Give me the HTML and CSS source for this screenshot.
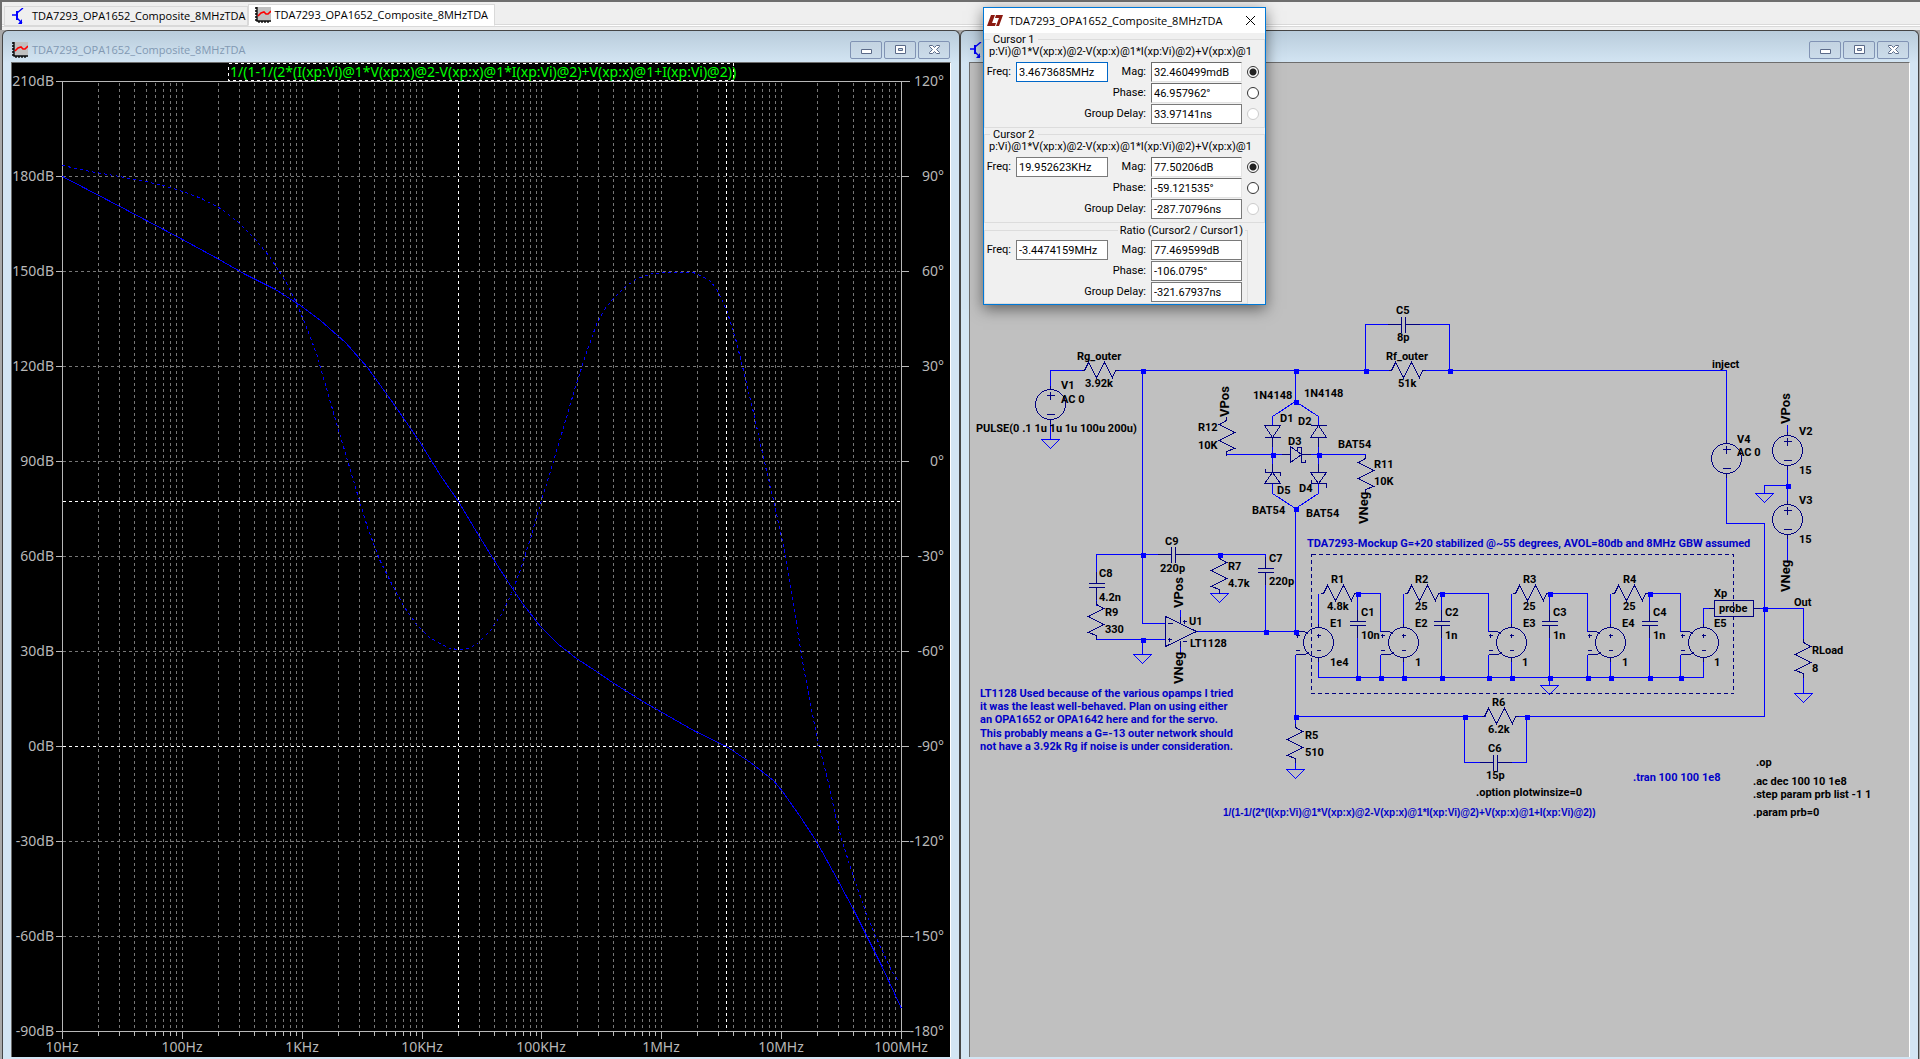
FILE: index.html
```html
<!DOCTYPE html>
<html lang="en">
<head>
<meta charset="utf-8">
<title>TDA7293_OPA1652_Composite_8MHzTDA</title>
<link rel="stylesheet" href="styles.css">
</head>
<body>
<svg class="defs" aria-hidden="true">
  <defs>
    <symbol id="icon-schematic" viewBox="0 0 16 16">
      <path d="M0 7H4M5 5L11 0M5 10L10 15" stroke="#00f" stroke-width="1.4" fill="none"/>
      <path d="M4 3h2v9H4zM10 11v5H6z" fill="#00f"/>
    </symbol>
    <symbol id="icon-plot" viewBox="0 0 16 16">
      <path d="M2 0H16V13H2z" fill="#c0c0c0"/>
      <path d="M2 0V14H16M0 1H2M0 4H2M0 7H2M0 10H2M0 13H2M4 14V16M7 14V16M10 14V16M13 14V16" stroke="#000" stroke-width="1.3" fill="none"/>
      <path d="M3 9L6 6L9 5L11 7L13 7L16 4" stroke="#f00" stroke-width="1.6" fill="none"/>
    </symbol>
    <symbol id="icon-min" viewBox="0 0 13 11"><path d="M1.500 5.500h10v4h-10z" fill="#fff" stroke="#5b6a88"/></symbol>
    <symbol id="icon-max" viewBox="0 0 13 11"><path d="M1.500 1.500h10v8h-10z" fill="#fff" stroke="#5b6a88"/><path d="M4.500 4.500h4v2h-4z" fill="#c6d6e4" stroke="#5b6a88"/></symbol>
    <symbol id="icon-close" viewBox="0 0 13 11"><path d="M1.500 1.500h3l2 2 2-2h3v1l-3 3 3 3v1h-3l-2-2-2 2h-3v-1l3-3-3-3z" fill="#fff" stroke="#5b6a88"/></symbol>
  </defs>
</svg>

<nav class="tabs" role="tablist" aria-label="Documents">
  <button class="tab" role="tab" type="button"><svg class="icon"><use href="#icon-schematic"/></svg>TDA7293_OPA1652_Composite_8MHzTDA</button>
  <button class="tab tab-active" role="tab" aria-selected="true" type="button"><svg class="icon"><use href="#icon-plot"/></svg>TDA7293_OPA1652_Composite_8MHzTDA</button>
</nav>

<main class="workspace">
  <section class="window">
    <header class="titlebar">
      <svg class="icon"><use href="#icon-plot"/></svg>
      <h1 class="title">TDA7293_OPA1652_Composite_8MHzTDA</h1>
      <div class="controls">
        <button type="button" aria-label="Minimize"><svg><use href="#icon-min"/></svg></button>
        <button type="button" aria-label="Restore"><svg><use href="#icon-max"/></svg></button>
        <button type="button" aria-label="Close"><svg><use href="#icon-close"/></svg></button>
      </div>
    </header>
    <div class="pane pane-plot">
      <svg class="plot" viewBox="12 63 938 994" preserveAspectRatio="xMinYMin meet">
        <defs>
          <path id="decade" d="M36 82V1031M57 82V1031M72 82V1031M84 82V1031M93 82V1031M101 82V1031M108 82V1031M114 82V1031"/>
          <path id="decade-ticks" d="M0 1031V1038M36 1031V1035M57 1031V1035M72 1031V1035M84 1031V1035M93 1031V1035M101 1031V1035M108 1031V1035M114 1031V1035"/>
        </defs>
        <g transform="translate(.5 .5)">
          <g class="grid">
            <use href="#decade" x="62"/><use href="#decade" x="182"/><use href="#decade" x="302"/><use href="#decade" x="422"/><use href="#decade" x="541"/><use href="#decade" x="661"/><use href="#decade" x="781"/>
            <path d="M182 82V1031M302 82V1031M422 82V1031M541 82V1031M661 82V1031M781 82V1031"/>
            <path d="M62 176H901M62 271H901M62 366H901M62 461H901M62 556H901M62 651H901M62 746H901M62 841H901M62 936H901"/>
          </g>
          <g class="axis">
            <path d="M55 81H909M55 1031H909M62 81V1031M901 81V1038"/>
            <path d="M55 176H62M55 271H62M55 366H62M55 461H62M55 556H62M55 651H62M55 746H62M55 841H62M55 936H62"/>
            <path d="M901 176H908M901 271H908M901 366H908M901 461H908M901 556H908M901 651H908M901 746H908M901 841H908M901 936H908"/>
            <use href="#decade-ticks" x="62"/><use href="#decade-ticks" x="182"/><use href="#decade-ticks" x="302"/><use href="#decade-ticks" x="422"/><use href="#decade-ticks" x="541"/><use href="#decade-ticks" x="661"/><use href="#decade-ticks" x="781"/>
          </g>
          <polyline class="trace" points="62,176 108,200 182,239 215,257 245,274 275,289 300,305 320,320 345,342 367,367 395,406 419,441 440,475 458,501 474,528 490,554 506,579 522,603 540,626 558,644 576,658 596,671 612,682 628,692 644,702 660,711 693,730 726,746 750,762 773,780 782,791 799,815 816,841 838,881 853,909 867,937 882,967 901,1008"/>
          <polyline class="trace trace-phase" points="62,165 90,171 119,176 145,181 163,185 182,191 201,198 220,208 238,222 254,238 269,256 284,279 295,300 306,327 316,353 326,388 337,426 345,453 355,487 367,527 379,559 392,585 404,607 416,624 428,636 441,644 450,648 458,649 468,648 478,642 490,630 502,612 511,593 520,569 530,538 540,503 549,474 557,447 566,417 575,386 586,352 596,324 604,309 613,298 625,286 637,278 652,273 667,272 693,272 708,279 715,287 721,298 727,312 735,338 743,370 753,412 762,453 773,500 784,550 793,604 802,661 810,704 818,743 828,782 835,815 842,842 853,876 866,914 877,940 891,970 899,982"/>
          <path class="cursor" d="M62 501H901M62 746H901M458 82V1031M726 82V1031"/>
          <path class="cursor" d="M228 63H733V80H228Z"/>
        </g>
        <g class="scale scale-end">
          <text x="54" y="86">210dB</text><text x="54" y="181">180dB</text><text x="54" y="276">150dB</text><text x="54" y="371">120dB</text><text x="54" y="466">90dB</text><text x="54" y="561">60dB</text><text x="54" y="656">30dB</text><text x="54" y="751">0dB</text><text x="54" y="846">-30dB</text><text x="54" y="941">-60dB</text><text x="54" y="1036">-90dB</text>
          <text x="944" y="86">120°</text><text x="944" y="181">90°</text><text x="944" y="276">60°</text><text x="944" y="371">30°</text><text x="944" y="466">0°</text><text x="944" y="561">-30°</text><text x="944" y="656">-60°</text><text x="944" y="751">-90°</text><text x="944" y="846">-120°</text><text x="944" y="941">-150°</text><text x="944" y="1036">-180°</text>
        </g>
        <g class="scale scale-mid">
          <text x="62" y="1052">10Hz</text><text x="182" y="1052">100Hz</text><text x="302" y="1052">1KHz</text><text x="422" y="1052">10KHz</text><text x="541" y="1052">100KHz</text><text x="661" y="1052">1MHz</text><text x="781" y="1052">10MHz</text><text x="901" y="1052">100MHz</text>
        </g>
        <text class="expression" x="230" y="77">1/(1-1/(2*(I(xp:Vi)@1*V(xp:x)@2-V(xp:x)@1*I(xp:Vi)@2)+V(xp:x)@1+I(xp:Vi)@2))</text>
      </svg>
    </div>
  </section>

  <section class="window">
    <header class="titlebar">
      <svg class="icon"><use href="#icon-schematic"/></svg>
      <div class="controls">
        <button type="button" aria-label="Minimize"><svg><use href="#icon-min"/></svg></button>
        <button type="button" aria-label="Restore"><svg><use href="#icon-max"/></svg></button>
        <button type="button" aria-label="Close"><svg><use href="#icon-close"/></svg></button>
      </div>
    </header>
    <div class="pane pane-schematic">
      <svg class="schematic" viewBox="970 63 939 994" preserveAspectRatio="xMinYMin meet">
        <defs>
          <path id="res-h" d="M-3 0H0L4 -8L12 7L20 -8L28 7L31 0H34"/>
          <path id="res-v" d="M0 -4V0L7 4L-8 12L7 20L-8 28L0 31V35"/>
          <path id="res-vl" d="M0 -4V0L-7 4L8 12L-7 20L8 28L0 31V35"/>
          <path id="cap-h" d="M-16 0H-2M-2 -8V8M2 -8V8M2 0H16"/>
          <path id="cap-v" d="M0 -14V-2M-8 -2H8M-8 2H8M0 2V14"/>
          <path id="gnd" d="M-9 0H9L0 9Z"/>
          <path id="node" d="M-2 -2H3V3H-2Z"/>
          <g id="source"><circle r="15"/><path d="M-4 -9H4M0 -13V-5M-4 10H4M0 -19V-15M0 15V19"/></g>
          <g id="vcvs"><circle r="15"/><path d="M-2 -7H2M0 -9V-5M-2 8H2M-23 -11H-14L-10 -8M-23 12H-13L-9 9M-23 -7H-19M-21 -9V-5M-23 8H-19M0 -19V-15M0 15V19"/></g>
        </defs>
        <g transform="translate(.5 .5)">
          <g class="wire">
            <path d="M1050 389V370H1082M1114 370H1389M1422 370H1726V443M1050 419V439M1142 370V623H1165M1295 370V401L1272 416V424M1295 401L1318 416V424M1226 454H1290M1302 454H1365V458M1272 437V472M1318 437V472M1272 483V493L1295 508L1318 493V483M1295 508V631M1365 370V324H1400M1406 324H1449V370"/>
            <path d="M1096 583V554H1171M1175 554H1265V568M1265 572V631M1096 588V605M1096 636V639H1165M1142 639V654M1180 609V623M1180 640V654M1196 631H1295M1295 654V727M1295 758V769M1295 716H1485M1515 716H1764V523H1726V473M1464 716V762H1493M1497 762H1526V716"/>
            <path d="M1318 627V593M1318 657V677H1703V657M1357 593H1380V631M1357 593V621M1357 625V677M1403 627V593M1403 657V677M1380 654V677M1441 593H1488V631M1441 593V621M1441 625V677M1488 654V677M1511 627V593M1511 657V677M1549 593H1587V631M1549 593V621M1549 625V685M1587 654V677M1610 627V593M1610 657V677M1649 593H1680V631M1649 593V621M1649 625V677M1680 654V677M1703 627V608H1714M1753 608H1803V642M1803 673V693"/>
            <path d="M1787 424V435M1787 466V504M1787 485H1764V493M1787 535V562"/>
            <use href="#gnd" x="1050" y="439"/><use href="#gnd" x="1142" y="654"/><use href="#gnd" x="1219" y="593"/><use href="#gnd" x="1295" y="769"/><use href="#gnd" x="1549" y="685"/><use href="#gnd" x="1764" y="493"/><use href="#gnd" x="1803" y="693"/>
          </g>
          <g class="part">
            <use href="#source" x="1050" y="404"/><use href="#source" x="1726" y="458"/><use href="#source" x="1787" y="450"/><use href="#source" x="1787" y="519"/>
            <use href="#res-h" x="1084" y="370"/><use href="#res-h" x="1391" y="370"/><use href="#res-h" x="1323" y="593"/><use href="#res-h" x="1407" y="593"/><use href="#res-h" x="1515" y="593"/><use href="#res-h" x="1614" y="593"/><use href="#res-h" x="1484" y="716"/>
            <use href="#res-vl" x="1226" y="420"/><use href="#res-vl" x="1365" y="458"/><use href="#res-v" x="1219" y="558"/><use href="#res-v" x="1096" y="604"/><use href="#res-v" x="1295" y="727"/><use href="#res-v" x="1803" y="642"/>
            <use href="#cap-h" x="1403" y="324"/><use href="#cap-h" x="1173" y="554"/><use href="#cap-h" x="1495" y="762"/>
            <use href="#cap-v" x="1096" y="585"/><use href="#cap-v" x="1265" y="570"/><use href="#cap-v" x="1357" y="623"/><use href="#cap-v" x="1441" y="623"/><use href="#cap-v" x="1549" y="623"/><use href="#cap-v" x="1649" y="623"/>
            <use href="#vcvs" x="1318" y="642"/><use href="#vcvs" x="1403" y="642"/><use href="#vcvs" x="1511" y="642"/><use href="#vcvs" x="1610" y="642"/><use href="#vcvs" x="1703" y="642"/>
            <path d="M1264 425H1280L1272 437ZM1264 437H1280M1272 437V446M1310 437H1326L1318 425ZM1310 425H1326M1318 437V446"/>
            <path d="M1290 446V462L1301 454ZM1297 450V447H1301V462H1305V459M1281 454H1290M1301 454H1310"/>
            <path d="M1264 483H1280L1272 472ZM1265 468V472H1280V475M1310 472H1326L1318 483ZM1311 479V483H1326V487M1272 463V472M1318 463V472"/>
            <path d="M1165 616V646L1196 631ZM1167 623H1172M1167 639H1171M1169 637V641M1182 621H1186M1184 619V623M1182 641H1186M1180 616V623M1180 640V646"/>
            <path d="M1714 600H1753V616H1714ZM1708 608H1714M1753 608H1759"/>
            <path class="boundary" d="M1311 554H1733V693H1311Z"/>
          </g>
          <g class="node">
            <use href="#node" x="1142" y="370"/><use href="#node" x="1295" y="370"/><use href="#node" x="1365" y="370"/><use href="#node" x="1449" y="370"/><use href="#node" x="1295" y="401"/><use href="#node" x="1272" y="454"/><use href="#node" x="1318" y="454"/><use href="#node" x="1295" y="508"/>
            <use href="#node" x="1142" y="554"/><use href="#node" x="1219" y="554"/><use href="#node" x="1142" y="639"/><use href="#node" x="1265" y="631"/><use href="#node" x="1295" y="631"/><use href="#node" x="1295" y="716"/><use href="#node" x="1464" y="716"/><use href="#node" x="1526" y="716"/>
            <use href="#node" x="1357" y="593"/><use href="#node" x="1441" y="593"/><use href="#node" x="1549" y="593"/><use href="#node" x="1649" y="593"/>
            <use href="#node" x="1357" y="677"/><use href="#node" x="1380" y="677"/><use href="#node" x="1403" y="677"/><use href="#node" x="1441" y="677"/><use href="#node" x="1488" y="677"/><use href="#node" x="1511" y="677"/><use href="#node" x="1549" y="677"/><use href="#node" x="1587" y="677"/><use href="#node" x="1610" y="677"/><use href="#node" x="1649" y="677"/><use href="#node" x="1680" y="677"/>
            <use href="#node" x="1764" y="608"/><use href="#node" x="1787" y="485"/>
          </g>
        </g>
        <g class="label">
          <text x="1077" y="360">Rg_outer</text><text x="1085" y="387">3.92k</text><text x="1061" y="389">V1</text><text x="1061" y="403">AC 0</text><text x="976" y="432">PULSE(0 .1 1u 1u 1u 100u 200u)</text>
          <text x="1198" y="431">R12</text><text x="1198" y="449">10K</text><text x="1253" y="399">1N4148</text><text x="1304" y="397">1N4148</text><text x="1280" y="422">D1</text><text x="1298" y="425">D2</text><text x="1288" y="445">D3</text><text x="1299" y="492">D4</text><text x="1277" y="494">D5</text><text x="1338" y="448">BAT54</text><text x="1252" y="514">BAT54</text><text x="1306" y="517">BAT54</text><text x="1374" y="468">R11</text><text x="1374" y="485">10K</text>
          <text x="1396" y="314">C5</text><text x="1397" y="341">8p</text><text x="1386" y="360">Rf_outer</text><text x="1398" y="387">51k</text>
          <text x="1165" y="545">C9</text><text x="1160" y="572">220p</text><text x="1269" y="562">C7</text><text x="1269" y="585">220p</text><text x="1228" y="570">R7</text><text x="1228" y="587">4.7k</text><text x="1099" y="577">C8</text><text x="1099" y="601">4.2n</text><text x="1105" y="616">R9</text><text x="1105" y="633">330</text><text x="1189" y="625">U1</text><text x="1190" y="647">LT1128</text>
          <text x="1331" y="583">R1</text><text x="1327" y="610">4.8k</text><text x="1330" y="627">E1</text><text x="1361" y="616">C1</text><text x="1361" y="639">10n</text><text x="1330" y="666">1e4</text>
          <text x="1415" y="583">R2</text><text x="1415" y="610">25</text><text x="1415" y="627">E2</text><text x="1445" y="616">C2</text><text x="1445" y="639">1n</text><text x="1415" y="666">1</text>
          <text x="1523" y="583">R3</text><text x="1523" y="610">25</text><text x="1523" y="627">E3</text><text x="1553" y="616">C3</text><text x="1553" y="639">1n</text><text x="1522" y="666">1</text>
          <text x="1623" y="583">R4</text><text x="1623" y="610">25</text><text x="1622" y="627">E4</text><text x="1653" y="616">C4</text><text x="1653" y="639">1n</text><text x="1622" y="666">1</text>
          <text x="1714" y="597">Xp</text><text x="1719" y="612">probe</text><text x="1714" y="627">E5</text><text x="1714" y="666">1</text>
          <text x="1305" y="739">R5</text><text x="1305" y="756">510</text><text x="1492" y="706">R6</text><text x="1488" y="733">6.2k</text><text x="1488" y="752">C6</text><text x="1486" y="779">15p</text><text x="1476" y="796">.option plotwinsize=0</text>
          <text x="1712" y="368">inject</text><text x="1737" y="443">V4</text><text x="1737" y="456">AC 0</text><text x="1799" y="435">V2</text><text x="1799" y="474">15</text><text x="1799" y="504">V3</text><text x="1799" y="543">15</text><text x="1794" y="606">Out</text><text x="1812" y="654">RLoad</text><text x="1812" y="672">8</text>
          <text x="1756" y="766">.op</text><text x="1753" y="785">.ac dec 100 10 1e8</text><text x="1753" y="798">.step param prb list -1 1</text><text x="1753" y="816">.param prb=0</text>
        </g>
        <g class="label net">
          <text transform="translate(1229 417) rotate(-90)">VPos</text><text transform="translate(1368 524) rotate(-90)">VNeg</text><text transform="translate(1183 608) rotate(-90)">VPos</text><text transform="translate(1183 684) rotate(-90)">VNeg</text><text transform="translate(1790 424) rotate(-90)">VPos</text><text transform="translate(1790 592) rotate(-90)">VNeg</text>
        </g>
        <g class="label note">
          <text x="980" y="697">LT1128 Used because of the various opamps I tried</text><text x="980" y="710">it was the least well-behaved. Plan on using either</text><text x="980" y="723">an OPA1652 or OPA1642 here and for the servo.</text><text x="980" y="737">This probably means a G=-13 outer network should</text><text x="980" y="750">not have a 3.92k Rg if noise is under consideration.</text>
          <text x="1307" y="547">TDA7293-Mockup G=+20 stabilized @~55 degrees, AVOL=80db and 8MHz GBW assumed</text>
          <text x="1633" y="781">.tran 100 100 1e8</text>
          <text class="formula" x="1223" y="816">1/(1-1/(2*(I(xp:Vi)@1*V(xp:x)@2-V(xp:x)@1*I(xp:Vi)@2)+V(xp:x)@1+I(xp:Vi)@2))</text>
        </g>
      </svg>
    </div>
  </section>
</main>

<form class="dialog" role="dialog" aria-labelledby="dialog-title">
  <header class="dialog-head">
    <svg class="dialog-logo" viewBox="0 0 16 11"><path d="M4 0H8L5 8H9L8 11H0ZM9 0H16L12 11H9L12 3H8Z" fill="#8b1a10"/></svg>
    <h2 class="title" id="dialog-title">TDA7293_OPA1652_Composite_8MHzTDA</h2>
    <button class="dialog-close" type="button" aria-label="Close"><svg viewBox="0 0 11 11"><path d="M1 1L10 10M10 1L1 10" stroke="#000" fill="none"/></svg></button>
  </header>
  <fieldset class="group">
    <legend>Cursor 1</legend>
    <p class="signal">p:Vi)@1*V(xp:x)@2-V(xp:x)@1*I(xp:Vi)@2)+V(xp:x)@1</p>
    <div class="readouts">
      <label for="f1">Freq:</label><input class="focused" id="f1" value="3.4673685MHz"><label for="m1">Mag:</label><input class="sunken" id="m1" value="32.460499mdB"><input type="radio" name="c1" aria-label="Cursor 1 magnitude" checked>
      <label class="wide" for="p1">Phase:</label><input class="sunken" id="p1" value="46.957962°"><input type="radio" name="c1" aria-label="Cursor 1 phase">
      <label class="wide" for="g1">Group Delay:</label><input id="g1" value="33.97141ns"><input type="radio" name="c1" aria-label="Cursor 1 group delay" disabled>
    </div>
  </fieldset>
  <fieldset class="group">
    <legend>Cursor 2</legend>
    <p class="signal">p:Vi)@1*V(xp:x)@2-V(xp:x)@1*I(xp:Vi)@2)+V(xp:x)@1</p>
    <div class="readouts">
      <label for="f2">Freq:</label><input id="f2" value="19.952623KHz"><label for="m2">Mag:</label><input class="sunken" id="m2" value="77.50206dB"><input type="radio" name="c2" aria-label="Cursor 2 magnitude" checked>
      <label class="wide" for="p2">Phase:</label><input class="sunken" id="p2" value="-59.121535°"><input type="radio" name="c2" aria-label="Cursor 2 phase">
      <label class="wide" for="g2">Group Delay:</label><input id="g2" value="-287.70796ns"><input type="radio" name="c2" aria-label="Cursor 2 group delay" disabled>
    </div>
  </fieldset>
  <fieldset class="group group-ratio">
    <legend>Ratio (Cursor2 / Cursor1)</legend>
    <div class="readouts">
      <label for="f3">Freq:</label><input id="f3" value="-3.4474159MHz"><label for="m3">Mag:</label><input id="m3" value="77.469599dB">
      <label class="wide" for="p3">Phase:</label><input class="last" id="p3" value="-106.0795°">
      <label class="wide" for="g3">Group Delay:</label><input class="last" id="g3" value="-321.67937ns">
    </div>
  </fieldset>
</form>
</body>
</html>
```
FILE: styles.css
```css
* { box-sizing: border-box; }

body {
  margin: 0;
  min-height: 100vh;
  display: flex;
  flex-direction: column;
  background: #a8a8a8;
  font: 11px/14px "Open Sans", "Noto Sans", sans-serif;
  color: #000;
  overflow: hidden;
}

button, input { font: inherit; margin: 0; padding: 0; }
h1, h2, p { margin: 0; }
.defs { position: absolute; width: 0; height: 0; }
.icon { width: 16px; height: 16px; flex: none; }

/* document tabs */
.tabs {
  display: flex;
  align-items: flex-end;
  height: 30px;
  padding: 0 2px 4px;
  border-top: 2px solid #6e6e6e;
  border-left: 2px solid #6e6e6e;
  background: linear-gradient(#efefef 22px, #d9d9d9 22px 23px, #fff 23px 24px, #d9d9d9 24px 25px, #f0f0f0 25px);
}
.tab {
  display: flex;
  align-items: center;
  gap: 4px;
  height: 20px;
  padding: 0 1px 0 7px;
  border: 1px solid #d9d9d9;
  background: #efefef;
  white-space: nowrap;
}
.tab-active {
  height: 22px;
  padding: 0 6px;
  background: #fff;
  border-bottom-color: #fff;
}

/* document windows */
.workspace {
  flex: 1;
  display: grid;
  grid-template-columns: 958fr 959fr;
  padding: 0 1px 0 2px;
}
.window {
  display: flex;
  flex-direction: column;
  min-width: 0;
  padding: 0 8px 2px;
  border: 1px solid #454545;
  border-bottom: 0;
  border-radius: 6px 6px 0 0;
  background: linear-gradient(#b9ccdb, #d3e5f3 32px);
}
.titlebar {
  display: flex;
  align-items: center;
  gap: 4px;
  height: 31px;
  padding: 6px 1px 0;
}
.title {
  font-size: 11px;
  font-weight: 400;
  line-height: 16px;
  white-space: nowrap;
}
.titlebar .title { color: #8299b3; }
.controls { display: flex; gap: 2px; margin-left: auto; }
.controls button {
  display: grid;
  place-items: center;
  width: 32px;
  height: 18px;
  border: 1px solid #8193b4;
  border-radius: 2px;
  background: linear-gradient(#c3d3e1, #cbdcea);
}
.controls svg { width: 13px; height: 11px; }
.pane {
  flex: 1;
  border: solid #6d6d6d;
  border-width: 1px 0 0 1px;
  border-right: 1px solid #fff;
}
.pane svg { display: block; width: 100%; height: auto; overflow: visible; }
.pane-plot { background: #000; }
.pane-schematic { background: #c0c0c0; }

/* plot */
.grid, .axis, .trace, .cursor { fill: none; stroke-width: 1; shape-rendering: crispEdges; }
.grid { stroke: #767676; stroke-dasharray: 3 3; }
.axis { stroke: #b8b8b8; }
.trace { stroke: #0000f8; }
.trace-phase { stroke-dasharray: 3 3; }
.cursor { stroke: #fff; stroke-dasharray: 3 3; }
.scale, .expression { font: 14px "Noto Sans", sans-serif; fill: #b8b8b8; }
.scale-end { text-anchor: end; }
.scale-mid { text-anchor: middle; }
.expression { fill: #0f0; }

/* schematic */
.wire, .part { fill: none; stroke-width: 1; shape-rendering: crispEdges; }
.wire { stroke: #00f; }
.part { stroke: #000080; }
.boundary { stroke-dasharray: 4 3; }
.node { fill: #00f; shape-rendering: crispEdges; }
.label { font: bold 11px Roboto, "Liberation Sans", sans-serif; fill: #000; }
.net { font-size: 13px; }
.note { fill: #0000c8; }
.formula { font: bold 10px "Liberation Sans", sans-serif; }

/* cursor readout dialog floating over both windows */
.dialog {
  position: absolute;
  top: 7px;
  left: 983px;
  width: 283px;
  border: 1px solid #0078d7;
  background: #f0f0f0;
  box-shadow: 0 4px 14px rgba(0, 0, 0, .5);
  font: 11px/12px Roboto, "Liberation Sans", sans-serif;
}
.dialog-head {
  display: flex;
  align-items: center;
  gap: 6px;
  height: 25px;
  padding: 0 9px 0 3px;
  background: #fff;
  font-family: "Open Sans", sans-serif;
}
.dialog-logo { width: 16px; height: 11px; }
.dialog-close {
  width: 11px;
  height: 11px;
  margin-left: auto;
  border: 0;
  background: none;
}
.dialog-close svg { display: block; width: 11px; height: 11px; }
.group {
  min-width: 0;
  margin: 0;
  padding: 0 0 3px;
  border: 1px solid #dcdcdc;
}
.group legend { margin-left: 5px; padding: 0 3px; line-height: 13px; }
.signal { padding-left: 4px; white-space: nowrap; }
.readouts {
  display: grid;
  grid-template-columns: 26px 92px 33px 91px 13px;
  grid-auto-rows: 20px;
  gap: 1px 5px;
  align-items: center;
  margin-top: 4px;
}
.readouts label { text-align: right; white-space: nowrap; }
.readouts .wide { grid-column: 1 / span 3; }
.readouts .last { grid-column: 4; }
.readouts input {
  width: 100%;
  height: 20px;
  padding: 0 2px;
  border: 1px solid #7a7a7a;
  background: #fff;
}
.readouts .focused { border-color: #0067c8; }
.readouts .sunken { border-color: #6d6d6d #e3e3e3 #e3e3e3 #6d6d6d; }
.readouts input[type="radio"] {
  appearance: none;
  width: 12px;
  height: 12px;
  padding: 0;
  border: 1px solid #333;
  border-radius: 50%;
}
.readouts input[type="radio"]:checked { background: radial-gradient(circle, #222 3px, #fff 4px); }
.readouts input[type="radio"]:disabled { border-color: #ccc; }
.group-ratio { width: 264px; margin-top: 1px; padding-bottom: 1px; }
.group-ratio legend { margin: 0 2px 0 auto; padding: 0 2px; }
.group-ratio .readouts { margin-top: 3px; }
```
